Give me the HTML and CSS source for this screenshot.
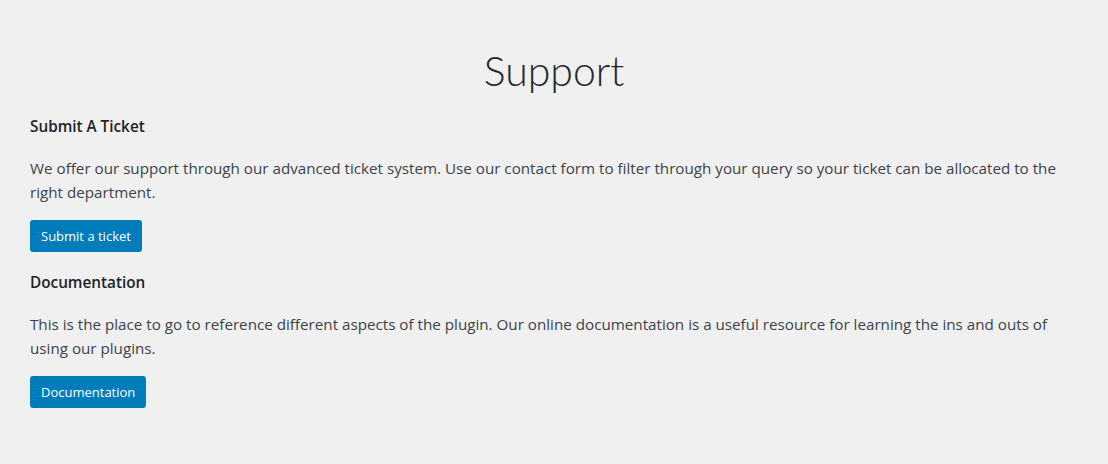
FILE: index.html
```html
<!DOCTYPE html>
<html lang="en">

<head>
    <meta charset="UTF-8">
    <meta name="viewport" content="width=device-width, initial-scale=1.0">
    <link rel="stylesheet" href="styles.css">
    <title>Support</title>
</head>

<body>

    <div class="support-page">
        <h1 class="page-title">Support</h1>

        <div class="support-section">
            <h3>Submit A Ticket</h3>
            <p>We offer our support through our advanced ticket system. Use our contact form to filter through your query so your ticket can be allocated to the right department.</p>
            <a class="button" href="#">Submit a ticket</a>
        </div>

        <div class="support-section">
            <h3>Documentation</h3>
            <p>This is the place to go to reference different aspects of the plugin. Our online documentation is a useful resource for learning the ins and outs of using our plugins.</p>
            <a class="button" href="#">Documentation</a>
        </div>
    </div>

</body>

</html>
```

FILE: styles.css
```css
body {
    font-family: 'Open Sans', 'Noto Sans', sans-serif;
    background-color: #f0f0f1;
    color: #3c434a;
    margin: 0;
}

.support-page {
    padding: 44px 30px 0 30px;
}

.page-title {
    margin: 0;
    font-family: 'Lato', 'Open Sans', sans-serif;
    font-size: 41px;
    font-weight: 300;
    line-height: 53px;
    color: #23282d;
    text-align: center;
}

.support-section h3 {
    margin: 19px 0 0 0;
    font-size: 15.3px;
    font-weight: 600;
    line-height: 20px;
    color: #1d2327;
}

.support-section p {
    margin: 20px 0 16px 0;
    font-size: 15.2px;
    line-height: 24px;
}

.support-section:last-child h3 {
    margin-top: 20px;
}

.support-section:last-child p {
    margin-top: 20px;
}

.button {
    display: inline-block;
    background-color: #007cba;
    color: #fff;
    font-size: 13px;
    line-height: 32px;
    padding: 0 11px;
    border-radius: 3px;
    text-decoration: none;
}
```
